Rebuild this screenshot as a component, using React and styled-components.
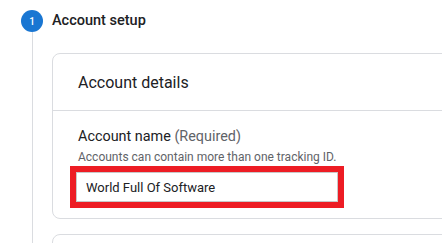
import React from "react";
import styled, { createGlobalStyle } from "styled-components";

const GlobalStyle = createGlobalStyle`
  html, body {
    margin: 0;
    padding: 0;
    background: #fff;
  }
  body {
    font-family: Roboto, "Liberation Sans", Arial, sans-serif;
    color: #202124;
    overflow: hidden;
  }
`;

function App() {
  return (
    <>
      <GlobalStyle />
      <Page>
        <Rail>
          <StepCircle>1</StepCircle>
          <RailLine />
        </Rail>
        <Content>
          <StepTitle>Account setup</StepTitle>
          <Card>
            <CardHeader>Account details</CardHeader>
            <CardBody>
              <Label>
                Account name <Muted>(Required)</Muted>
              </Label>
              <Helper>Accounts can contain more than one tracking ID.</Helper>
              <Highlight>
                <TextInput defaultValue="World Full Of Software" />
              </Highlight>
            </CardBody>
          </Card>
          <Card $next />
        </Content>
      </Page>
    </>
  );
}

export default App;

const Page = styled.div`
  display: flex;
  height: 243px;
  padding: 10px 0 0 21px;
  box-sizing: border-box;
  overflow: hidden;
`;

const Rail = styled.div`
  display: flex;
  flex-direction: column;
  align-items: center;
  width: 22px;
  flex-shrink: 0;
`;

const StepCircle = styled.div`
  width: 22px;
  height: 22px;
  border-radius: 50%;
  background: #1976d2;
  color: #fff;
  font-size: 10px;
  font-weight: 500;
  display: flex;
  align-items: center;
  justify-content: center;
`;

const RailLine = styled.div`
  flex: 1;
  width: 1px;
  background: #dadce0;
`;

const Content = styled.div`
  flex: 1;
  margin-left: 9px;
  margin-right: -40px;
`;

const StepTitle = styled.div`
  height: 22px;
  line-height: 22px;
  font-size: 14.5px;
  font-weight: 500;
  color: #202124;
`;

const Card = styled.div`
  margin-top: ${({ $next }) => ($next ? "15px" : "21px")};
  border: 1px solid #dadce0;
  border-radius: 8px;
  min-height: ${({ $next }) => ($next ? "40px" : "auto")};
`;

const CardHeader = styled.div`
  height: 56px;
  display: flex;
  align-items: center;
  padding-left: 25px;
  font-size: 16px;
  color: #202124;
  border-bottom: 1px solid #dadce0;
`;

const CardBody = styled.div`
  padding: 16px 0 10px 25px;
`;

const Label = styled.div`
  font-size: 14.4px;
  line-height: 20px;
  color: #202124;
`;

const Muted = styled.span`
  color: #5f6368;
`;

const Helper = styled.div`
  margin-top: 2px;
  font-size: 12px;
  line-height: 16px;
  color: #5f6368;
`;

const Highlight = styled.div`
  display: inline-block;
  margin: 1px 0 0 -8px;
  border: 6px solid #ed1c24;
  line-height: 0;
`;

const TextInput = styled.input`
  width: 262px;
  height: 30px;
  box-sizing: border-box;
  border: 1px solid #c8c8c8;
  padding: 0 9px;
  font-family: Roboto, "Liberation Sans", Arial, sans-serif;
  font-size: 13px;
  color: #202124;
  outline: none;
`;
